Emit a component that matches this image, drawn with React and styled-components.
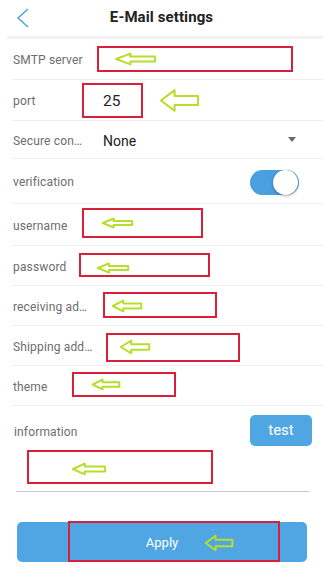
import React from 'react';
import styled, { createGlobalStyle } from 'styled-components';

const GlobalStyle = createGlobalStyle`
  html, body {
    margin: 0;
    padding: 0;
    background: #fff;
  }
  body {
    font-family: Roboto, "Noto Sans", "Liberation Sans", sans-serif;
    -webkit-font-smoothing: antialiased;
  }
`

const Page = styled.div`
  width: 323px;
  height: 573px;
  position: relative;
  overflow: hidden;
  background: #fff;
`

const Header = styled.header`
  height: 36px;
  display: grid;
  grid-template-columns: 40px 1fr 40px;
  align-items: center;
`

const BackButton = styled.button`
  width: 40px;
  height: 36px;
  padding: 0 0 1px 6px;
  border: none;
  background: none;
  display: flex;
  align-items: center;
  justify-content: center;
`

const Title = styled.h1`
  margin: 0;
  text-align: center;
  font-size: 15px;
  font-weight: 700;
  color: #222;
  letter-spacing: 0.1px;
  padding-bottom: 2px;
`

const HeaderRule = styled.div`
  height: 3px;
  margin-left: 7px;
  background: #f3f3f3;
`

const List = styled.div`
  display: flex;
  flex-direction: column;
  padding-left: 12px;
`

const Row = styled.div`
  position: relative;
  box-sizing: border-box;
  height: ${props => props.h}px;
  display: flex;
  align-items: center;
  border-bottom: 1px solid #f0f0f0;
  padding-right: 24px;
`

const Label = styled.span`
  flex: none;
  width: 90px;
  font-size: 12px;
  letter-spacing: 0.15px;
  color: #6d6d6d;
  padding-left: 1px;
  padding-top: 2px;
  white-space: nowrap;
`

const Value = styled.span`
  flex: 1;
  font-size: ${props => props.big ? 15.5 : 14}px;
  color: #222;
  padding-top: 2px;
`

const Caret = styled.span`
  width: 0;
  height: 0;
  border-left: 4px solid transparent;
  border-right: 4px solid transparent;
  border-top: 5px solid #6a6a6a;
  margin-right: 3px;
`

const Switch = styled.div`
  position: relative;
  width: 49px;
  height: 25px;
  border-radius: 13px;
  background: #4a9fe0;
  margin-left: auto;
  margin-top: 3px;
`

const Knob = styled.div`
  position: absolute;
  right: 1px;
  top: 0;
  width: 25px;
  height: 25px;
  border-radius: 50%;
  background: #fff;
  box-shadow: 0 1px 3px rgba(0, 0, 0, 0.35);
`

const InfoBlock = styled.div`
  position: relative;
  padding: 9px 11px 0 13px;
`

const InfoHead = styled.div`
  display: flex;
  align-items: center;
  justify-content: space-between;
  height: 31px;
`

const TestButton = styled.button`
  width: 62px;
  height: 31px;
  border: none;
  border-radius: 5px;
  background: #4fa6e3;
  color: #fff;
  font-family: inherit;
  font-size: 15px;
  padding: 0 0 2px;
`

const InfoArea = styled.div`
  height: 45px;
  margin: 0 3px;
  border-bottom: 1px solid #c9c9c9;
`

const Footer = styled.div`
  padding: 30px 16px 0 17px;
`

const ApplyButton = styled.button`
  position: relative;
  width: 100%;
  height: 40px;
  border: none;
  border-radius: 5px;
  background: #4fa6e3;
  color: #fff;
  font-family: inherit;
  font-size: 13px;
  padding: 1px 0 0;
`

/* annotation overlays drawn on top of the screenshot */
const Mark = styled.div`
  position: absolute;
  box-sizing: border-box;
  left: ${props => props.x}px;
  top: ${props => props.y}px;
  width: ${props => props.w}px;
  height: ${props => props.h}px;
  border: 2px solid #d9203b;
  pointer-events: none;
`

const ArrowSvg = styled.svg`
  position: absolute;
  left: ${props => props.x}px;
  top: ${props => props.y}px;
  overflow: visible;
  pointer-events: none;
`

function Arrow({ x, y, w, h }) {
  return (
    <ArrowSvg x={x} y={y} width={w} height={h} viewBox="0 0 40 20" preserveAspectRatio="none">
      <path
        d="M1 10 L15 1 L15 6 L39 6 L39 14 L15 14 L15 19 Z"
        fill="none"
        stroke="#b6de2a"
        strokeWidth="2"
        strokeLinejoin="round"
        vectorEffect="non-scaling-stroke"
      />
    </ArrowSvg>
  )
}

// offsets of the marks are relative to each row (list starts 12px in)
const rows = [
  { label: 'SMTP server', h: 41, box: [85, 7, 196, 26], arrow: [103, 14, 41, 12] },
  { label: 'port', h: 41, value: '25', big: true, box: [70, 3, 61, 35], arrow: [148, 9, 39, 23] },
  { label: 'Secure con…', h: 38, value: 'None', caret: true },
  { label: 'verification', h: 45, toggle: true },
  { label: 'username', h: 42, box: [70, 4, 121, 30], arrow: [90, 14, 31, 10] },
  { label: 'password', h: 40, box: [67, 7, 131, 24], arrow: [85, 17, 32, 10] },
  { label: 'receiving ad…', h: 40, box: [91, 6, 114, 26], arrow: [100, 14, 30, 12] },
  { label: 'Shipping add…', h: 40, box: [94, 7, 134, 29], arrow: [108, 14, 30, 14] },
  { label: 'theme', h: 40, box: [60, 6, 104, 25], arrow: [80, 13, 28, 11] },
]

export default function App() {
  return (
    <Page>
      <GlobalStyle />
      <Header>
        <BackButton>
          <svg width="14" height="20" viewBox="0 0 14 20">
            <polyline points="12,1 2,10 12,19" fill="none" stroke="#4a9fe0" strokeWidth="1.4" />
          </svg>
        </BackButton>
        <Title>E-Mail settings</Title>
      </Header>
      <HeaderRule />
      <List>
        {rows.map(r => (
          <Row key={r.label} h={r.h}>
            <Label>{r.label}</Label>
            {r.value && <Value big={r.big}>{r.value}</Value>}
            {r.caret && <Caret />}
            {r.toggle && (
              <Switch>
                <Knob />
              </Switch>
            )}
            {r.box && <Mark x={r.box[0]} y={r.box[1]} w={r.box[2]} h={r.box[3]} />}
            {r.arrow && <Arrow x={r.arrow[0]} y={r.arrow[1]} w={r.arrow[2]} h={r.arrow[3]} />}
          </Row>
        ))}
      </List>
      <InfoBlock>
        <InfoHead>
          <Label>information</Label>
          <TestButton>test</TestButton>
        </InfoHead>
        <InfoArea />
        <Mark x={27} y={44} w={186} h={34} />
        <Arrow x={72} y={57} w={34} h={12} />
      </InfoBlock>
      <Footer>
        <ApplyButton>
          Apply
          <Mark x={51} y={-1} w={212} h={41} />
          <Arrow x={188} y={13} w={28} h={16} />
        </ApplyButton>
      </Footer>
    </Page>
  )
}
